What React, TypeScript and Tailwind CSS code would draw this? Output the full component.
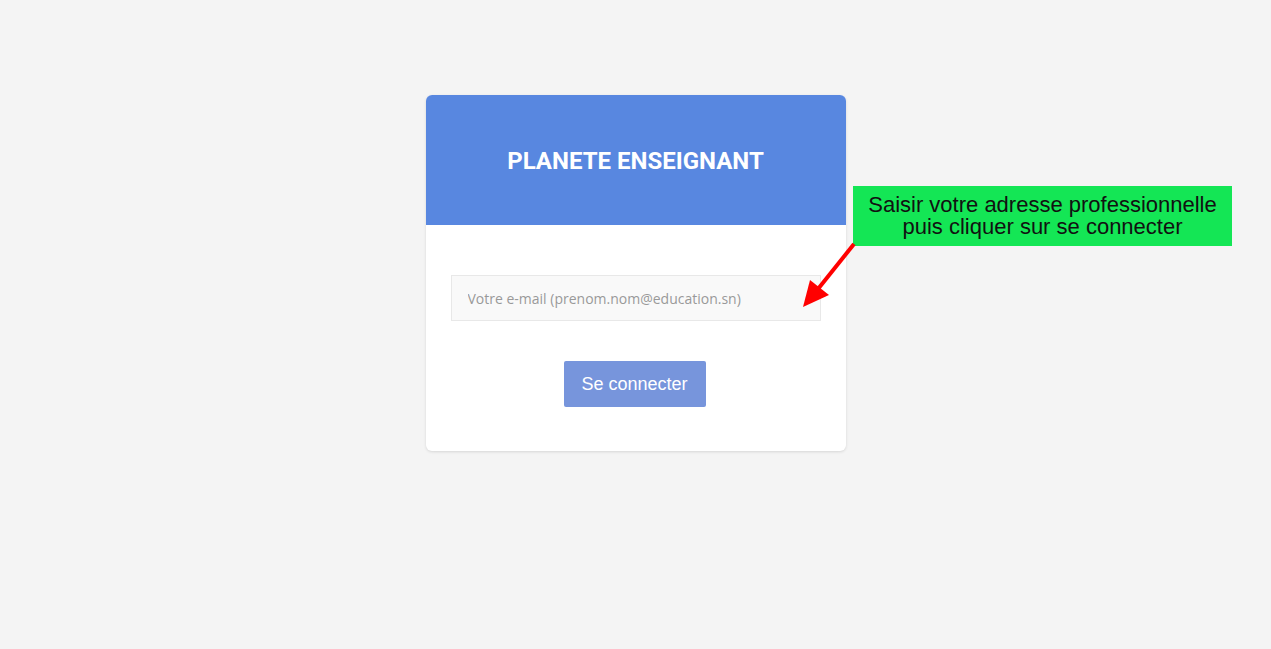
import React from "react";

export default function App() {
  return (
    <div className="relative min-h-[649px] w-full bg-[#f4f4f4]">
      <div className="flex justify-center pt-[95px]">
        <div className="w-[420px] overflow-hidden rounded-[6px] bg-white shadow-[0_1px_3px_rgba(0,0,0,0.12)]">
          <div className="flex h-[130px] items-center justify-center bg-[#5887e0] pt-[2px]">
            <h1 className="text-[24px] font-bold text-white [font-family:Roboto,sans-serif]">
              PLANETE ENSEIGNANT
            </h1>
          </div>
          <div className="px-[25px] pt-[50px] pb-[44px]">
            <input
              type="text"
              placeholder="Votre e-mail (prenom.nom@education.sn)"
              className="block h-[46px] w-full border border-[#e8e8e8] bg-[#f9f9f9] px-[16px] text-[14px] text-[#555] outline-none placeholder:text-[#999] [font-family:'Open_Sans',sans-serif]"
            />
            <div className="mt-[40px] flex justify-center pr-[2px]">
              <button className="h-[46px] w-[142px] rounded-[2px] bg-[#7795dc] text-[18px] text-white [font-family:'Liberation_Sans',Arial,sans-serif]">
                Se connecter
              </button>
            </div>
          </div>
        </div>
      </div>

      <div className="absolute left-[853px] top-[186px] flex h-[60px] w-[379px] flex-col items-center justify-center bg-[#14e655] pb-[1px] text-[22px] leading-[22px] text-[#111] [font-family:'Liberation_Sans',Arial,sans-serif]">
        <span>Saisir votre adresse professionnelle</span>
        <span>puis cliquer sur se connecter</span>
      </div>

      <svg className="absolute left-0 top-0" width="1271" height="649" style={{ pointerEvents: "none" }}>
        <line x1="854" y1="244" x2="818" y2="289" stroke="#ff0000" strokeWidth="4" />
        <polygon points="803,307 810,280 829,295" fill="#ff0000" />
      </svg>
    </div>
  );
}
